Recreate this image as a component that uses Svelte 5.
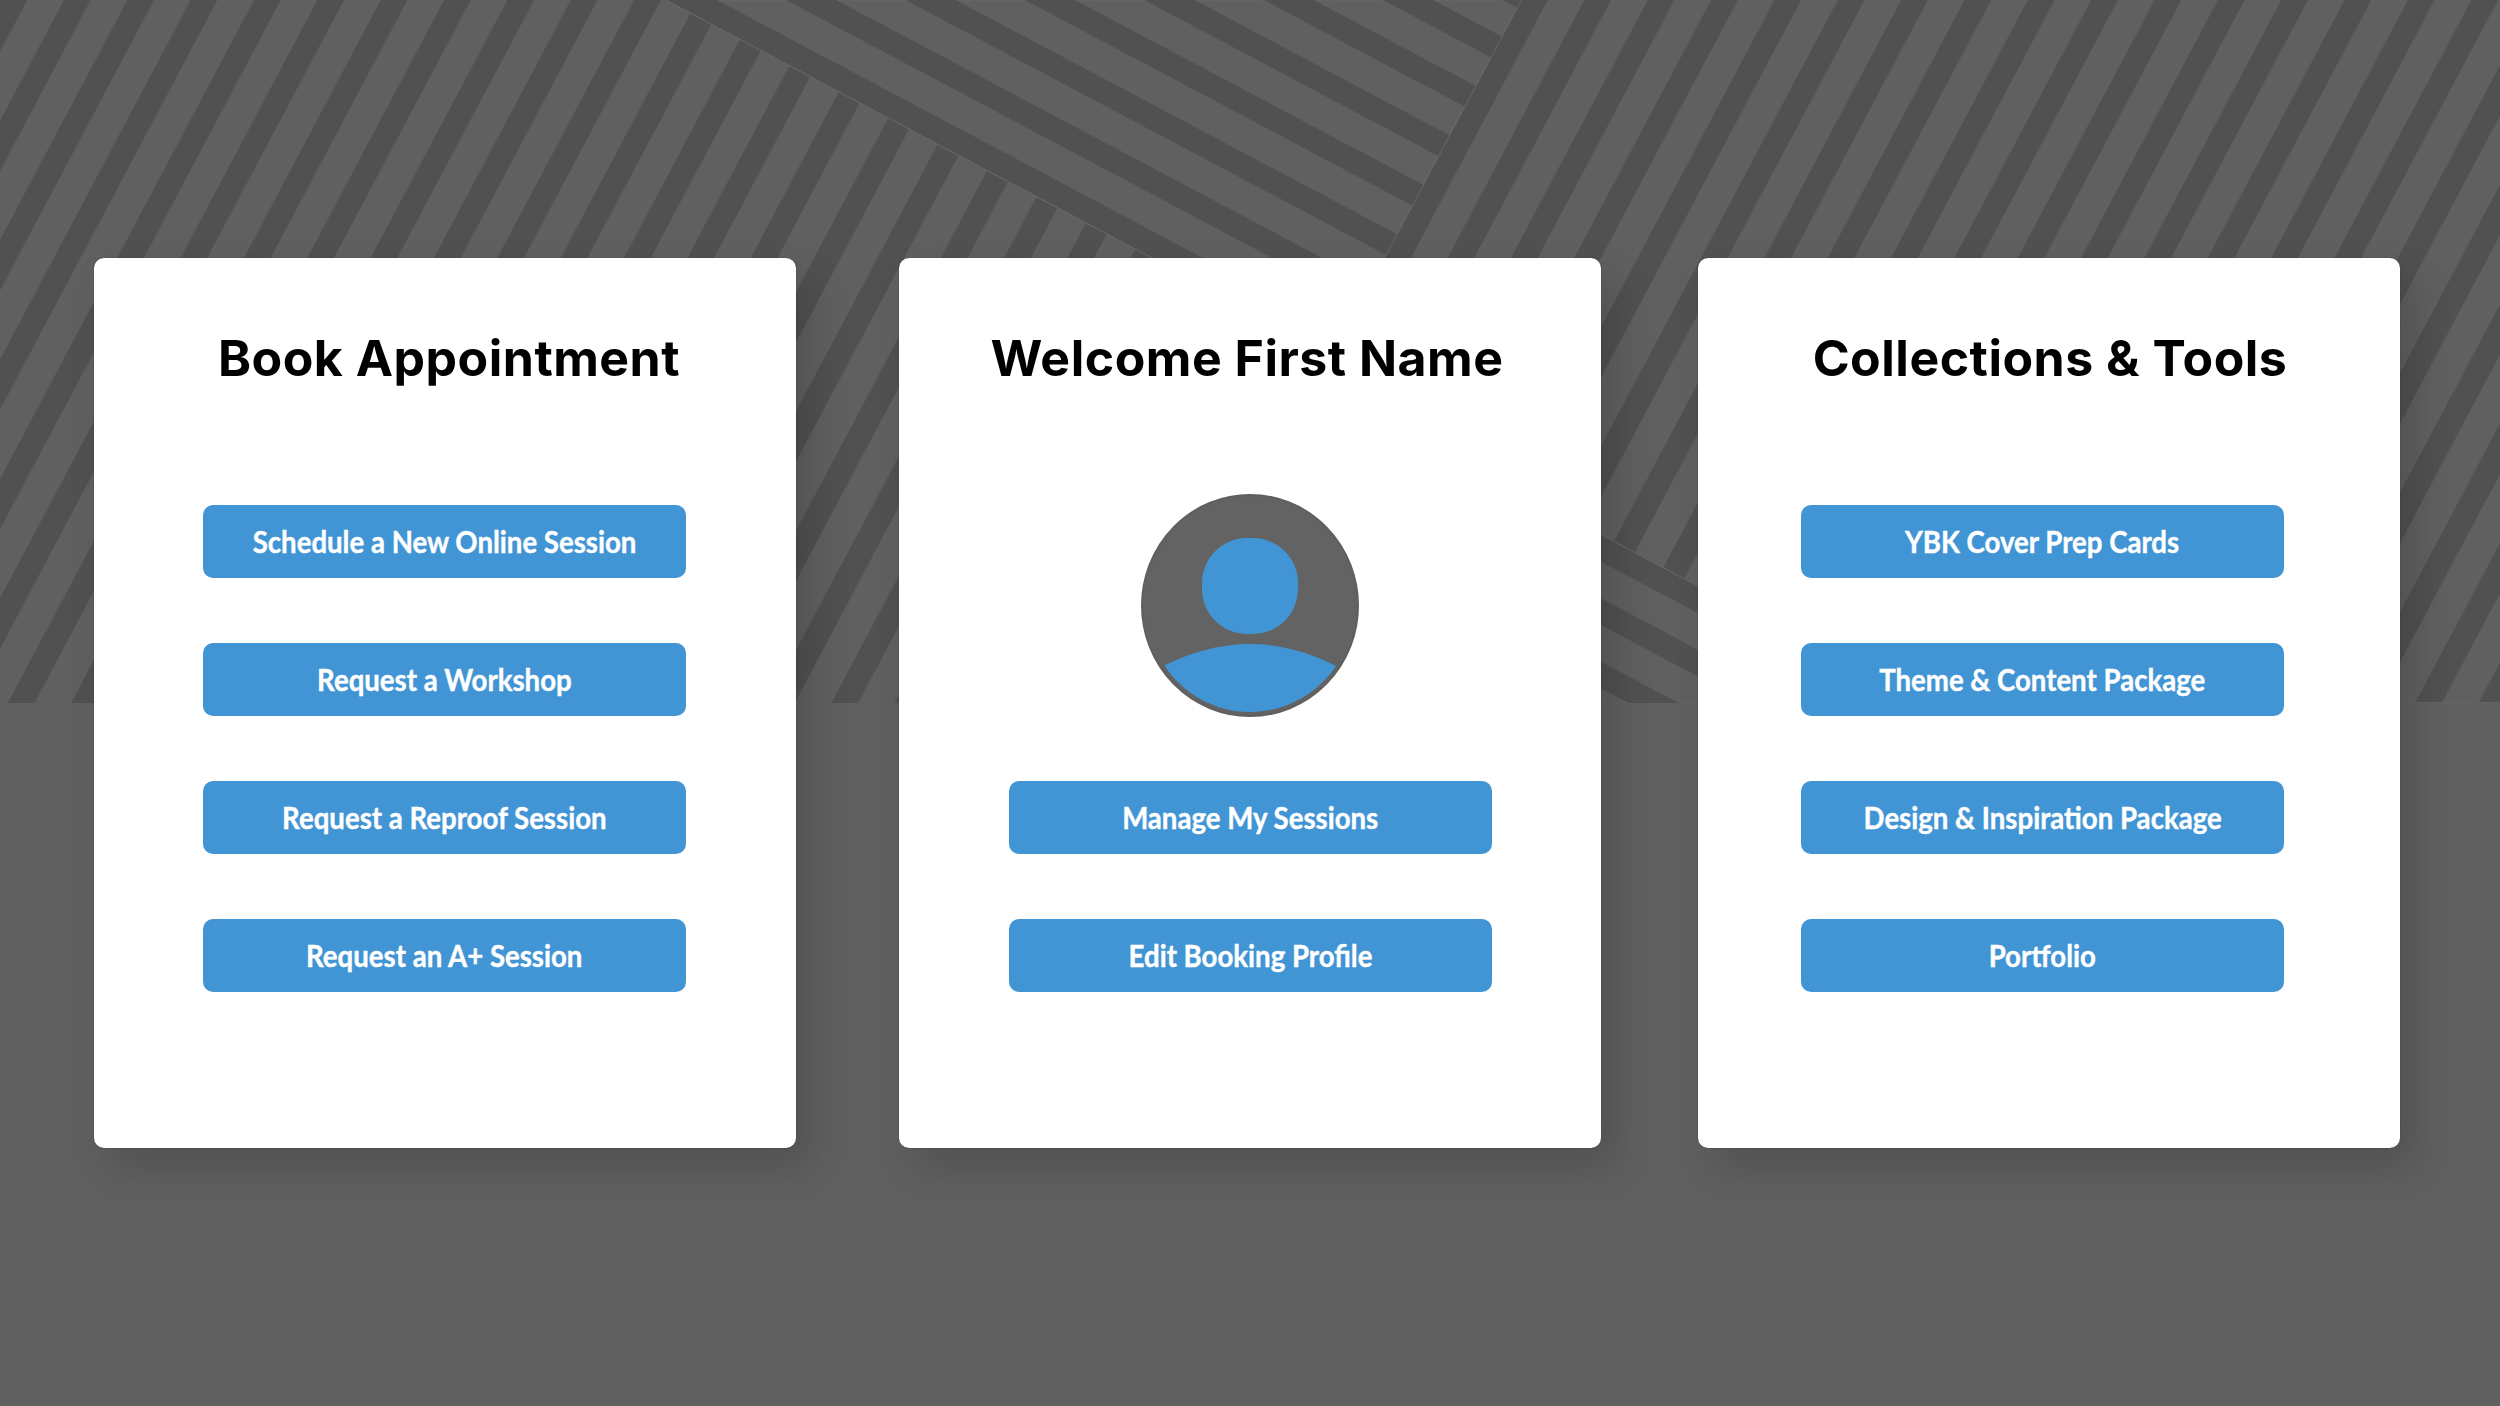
<script>
  const cards = [
    {
      id: 'c1',
      title: 'Book Appointment',
      buttons: ['Schedule a New Online Session', 'Request a Workshop', 'Request a Reproof Session', 'Request an A+ Session']
    },
    {
      id: 'c2',
      title: 'Welcome First Name',
      avatar: true,
      buttons: ['Manage My Sessions', 'Edit Booking Profile']
    },
    {
      id: 'c3',
      title: 'Collections & Tools',
      buttons: ['YBK Cover Prep Cards', 'Theme & Content Package', 'Design & Inspiration Package', 'Portfolio']
    }
  ];

  // stripe geometry of the backdrop, all three patches share one grid
  const H = 703;
  const steep = 1.885;
  const flat = 0.5306;

  const upStripes = Array.from({ length: 50 }, (_, k) => {
    const a = 64 + 63.35 * (k - 1);
    const b = a + 26.7;
    const s = H / steep;
    return `${a},0 ${b},0 ${b - s},${H} ${a - s},${H}`;
  });

  function downStripe(x0, dy) {
    const y = (x, o) => ((x - o) * flat + dy).toFixed(1);
    return `0,${y(0, x0)} 2500,${y(2500, x0)} 2500,${y(2500, x0 + 50)} 0,${y(0, x0 + 50)}`;
  }

  const topStripes = Array.from({ length: 12 }, (_, k) => downStripe(666.7 + 119.4 * k, 0));
  const lowStripes = Array.from({ length: 8 }, (_, k) => downStripe(547.3 - 119.4 * k, 2.5));

  const topPatch = '666.7,0 1333.3,353.7 1521,0';
  const lowPatch = `1300,${((1300 - 597.3) * flat + 2.5).toFixed(1)} 2500,${((2500 - 597.3) * flat + 2.5).toFixed(1)} 2500,${H} 1300,${H}`;
</script>

<div class="page">
  <svg class="backdrop" width="2500" height={H} viewBox="0 0 2500 {H}" aria-hidden="true">
    <defs>
      <clipPath id="top-patch"><polygon points={topPatch} /></clipPath>
      <clipPath id="low-patch"><polygon points={lowPatch} /></clipPath>
    </defs>
    {#each upStripes as p}
      <polygon points={p} class="dark" />
    {/each}
    <polygon points={topPatch} class="patch" />
    <g clip-path="url(#top-patch)">
      {#each topStripes as p}
        <polygon points={p} class="dark" />
      {/each}
    </g>
    <polygon points={lowPatch} class="patch" />
    <g clip-path="url(#low-patch)">
      {#each lowStripes as p}
        <polygon points={p} class="dark" />
      {/each}
    </g>
  </svg>

  <main class="cards">
    {#each cards as card (card.id)}
      <section class="card {card.id}">
        <h2>{card.title}</h2>
        {#if card.avatar}
          <svg class="avatar" width="218" height="223" viewBox="0 0 218 223" role="img" aria-label="Profile picture">
            <ellipse cx="109" cy="111.5" rx="108" ry="110.5" class="face" />
            <rect x="61" y="44" width="96" height="96" rx="45" class="blue" />
            <path d="M23.5 171.500 C50 158 80 150 109 150 C138 150 168 158 195 172 C176 200 144 218 109 218 C74 218 42 200 23.500 171.500 Z" class="blue" />
          </svg>
        {/if}
        <div class="buttons">
          {#each card.buttons as label}
            <button type="button"><span>{label}</span></button>
          {/each}
        </div>
      </section>
    {/each}
  </main>
</div>

<style>
  :global(body) {
    margin: 0;
    background: #606060;
  }
  .page {
    position: relative;
    width: 2500px;
    height: 1406px;
    overflow: hidden;
    background: #606060;
    font-family: Lato, "Open Sans", sans-serif;
  }
  .backdrop {
    position: absolute;
    left: 0;
    top: 0;
    display: block;
  }
  .dark {
    fill: #515151;
  }
  .patch {
    fill: #606060;
    stroke: #656565;
    stroke-width: 2;
  }
  .cards {
    position: relative;
    display: flex;
    gap: 103px;
    padding: 258px 0 0 94px;
  }
  .card {
    width: 702px;
    height: 890px;
    box-sizing: border-box;
    padding-top: 70px;
    display: flex;
    flex-direction: column;
    align-items: center;
    background: #fff;
    border-radius: 10px;
    box-shadow: 15px 20px 40px rgba(0, 0, 0, 0.16), 0 0 1px rgba(0, 0, 0, 0.5);
  }
  .c3 {
    margin-left: -6px;
  }
  h2 {
    margin: 0;
    height: 60px;
    line-height: 60px;
    font-family: Inter, Lato, sans-serif;
    font-size: 50px;
    font-weight: 700;
    letter-spacing: 0.5px;
    color: #000;
    white-space: nowrap;
  }
  .c1 h2 {
    padding-left: 8px;
  }
  .c2 h2 {
    padding-right: 6px;
  }
  .c3 h2 {
    padding-left: 2px;
  }
  .avatar {
    display: block;
    margin-top: 106px;
  }
  .face {
    fill: #636363;
    stroke: #5f5f5f;
    stroke-width: 2;
  }
  .blue {
    fill: #4295d5;
  }
  .buttons {
    margin-top: 117px;
    display: flex;
    flex-direction: column;
    gap: 65px;
  }
  .c1 .buttons {
    margin-right: 1px;
  }
  .c2 .buttons {
    margin-top: 64px;
  }
  .c3 .buttons {
    margin-right: 13px;
  }
  button {
    display: block;
    width: 483px;
    height: 73px;
    padding: 0 0 2px;
    border: 0;
    border-radius: 10px;
    background: #4295d5;
    color: #fff;
    font: 700 30px Lato, "Open Sans", sans-serif;
    white-space: nowrap;
  }
  button span {
    display: inline-block;
    transform: scaleX(0.92);
    -webkit-text-stroke: 0.4px #fff;
  }
</style>
